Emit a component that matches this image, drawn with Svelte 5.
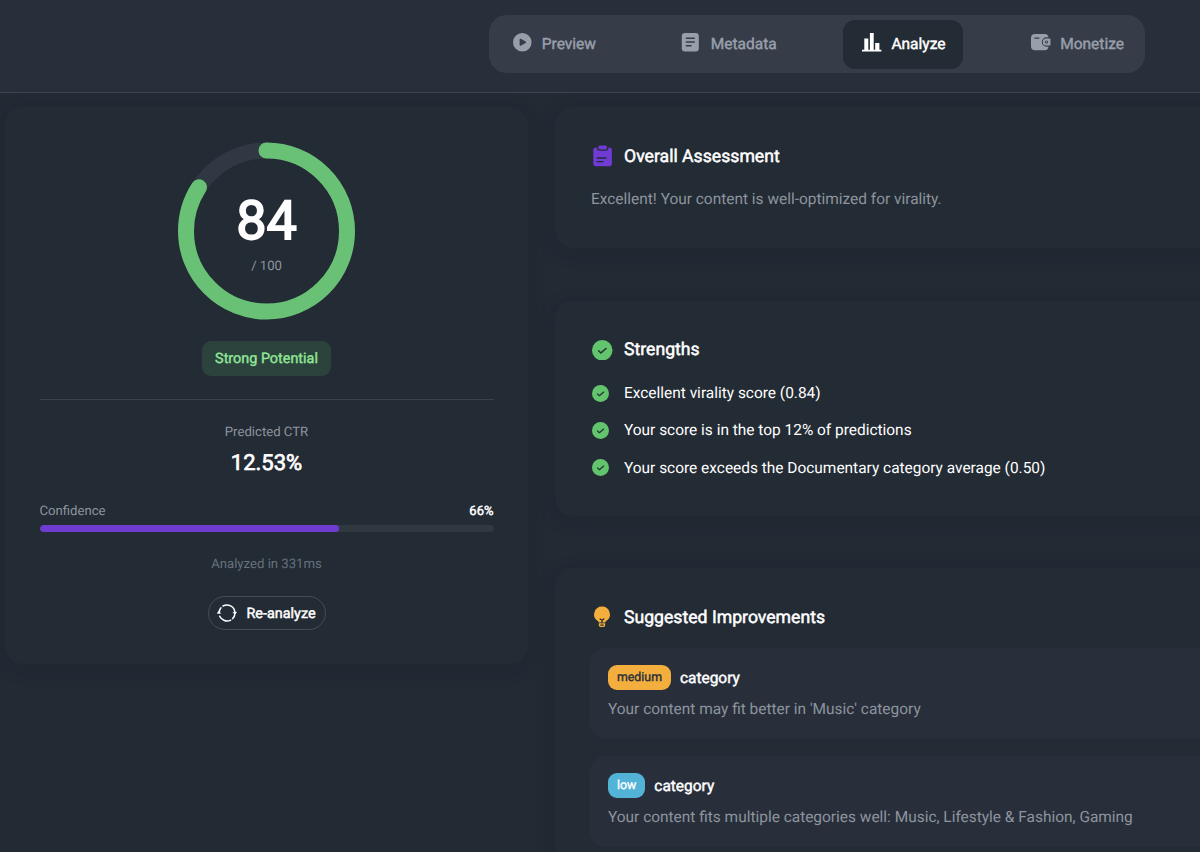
<script>
  const tabs = [
    { id: 'preview', label: 'Preview' },
    { id: 'metadata', label: 'Metadata' },
    { id: 'analyze', label: 'Analyze' },
    { id: 'monetize', label: 'Monetize' }
  ];
  const active = 'analyze';
  const score = 84;
  const confidence = 66;
  const radius = 80.5;
  const around = 2 * Math.PI * radius;
  const strengths = [
    'Excellent virality score (0.84)',
    'Your score is in the top 12% of predictions',
    'Your score exceeds the Documentary category average (0.50)'
  ];
  const improvements = [
    { level: 'medium', field: 'category', text: "Your content may fit better in 'Music' category" },
    { level: 'low', field: 'category', text: 'Your content fits multiple categories well: Music, Lifestyle & Fashion, Gaming' }
  ];
</script>

{#snippet check(size)}
  <svg width={size} height={size} viewBox="0 0 20 20">
    <circle cx="10" cy="10" r="10" fill="#63c46e" />
    <path d="M6.4 10.5l2.3 2.1 5-4.3" fill="none" stroke="#24302f" stroke-width="1.4" stroke-linecap="round" stroke-linejoin="round" />
  </svg>
{/snippet}

<div class="page">
  <header>
    <nav>
      {#each tabs as tab}
        <button class="tab" class:active={tab.id === active}>
          <svg width="20" height="20" viewBox="0 0 20 20" fill="currentColor">
            {#if tab.id === 'preview'}
              <path fill-rule="evenodd" d="M9.3 0a9.3 9.3 0 1 1 0 18.6A9.3 9.3 0 0 1 9.3 0zM6.6 6.5v5.6c0 .7.7 1 1.2.7l4.8-2.8c.6-.4.6-1 0-1.4L7.8 5.8c-.5-.3-1.2 0-1.2.7z" />
            {:else if tab.id === 'metadata'}
              <rect x="0.800" y="0" width="17" height="18.500" rx="3.200" />
              <path d="M5.300 5.200h8M5.300 9h8M5.300 12.800h4.800" stroke="#363d49" stroke-width="1.400" stroke-linecap="round" />
            {:else if tab.id === 'analyze'}
              <path d="M2.300 5.500h4v11.300h1.600V0h3.800v16.800h1.500V10h4.200v6.800h2v1.600H0v-1.600h2.300z" />
            {:else}
              <path d="M4 1h9.500a4 4 0 0 1 4 3.300h-2a4.700 4.700 0 0 0 0 9.400h2a4 4 0 0 1-4 3.500H4a4 4 0 0 1-4-4V5a4 4 0 0 1 4-4z" />
              <path d="M3.800 5.200h4" stroke="#363d49" stroke-width="1.300" stroke-linecap="round" />
              <path fill-rule="evenodd" d="M15.300 5.500h3.100c.7 0 1.100.4 1.100 1v5c0 .6-.4 1-1.100 1h-3.100a3.500 3.500 0 0 1 0-7zm.2 1.900a1.600 1.600 0 1 0 0 3.200 1.600 1.600 0 0 0 0-3.200z" />
              <circle cx="15.500" cy="9" r=".7" />
            {/if}
          </svg>
          <span>{tab.label}</span>
        </button>
      {/each}
    </nav>
  </header>

  <main>
    <section class="card summary">
      <div class="gauge">
        <svg width="178" height="178" viewBox="0 0 178 178" fill="none" stroke-width="16">
          <circle cx="88.500" cy="89" r={radius} stroke="#303843" />
          <circle cx="88.500" cy="89" r={radius} stroke="#68c174" stroke-linecap="round"
            stroke-dasharray="{around * score / 100} {around}" transform="rotate(-90 88.500 89)" />
        </svg>
        <div class="reading">
          <strong>{score}</strong>
          <span>/ 100</span>
        </div>
      </div>
      <div class="verdict">Strong Potential</div>
      <hr />
      <div class="label">Predicted CTR</div>
      <div class="ctr">12.53%</div>
      <div class="confidence">
        <span class="label">Confidence</span>
        <b>{confidence}%</b>
      </div>
      <div class="bar"><div style="width: {confidence}%"></div></div>
      <div class="timing">Analyzed in 331ms</div>
      <button class="again">
        <svg width="20" height="20" viewBox="0 0 20 20" fill="none" stroke="currentColor" stroke-width="1.500" stroke-linecap="round">
          <path d="M2.100 9.600A8 8 0 0 1 4 4.800M6 3A8 8 0 0 1 17.900 9.200M17.900 10.600A8 8 0 0 1 15.700 15.600M13.700 17.100A8 8 0 0 1 2.700 13.300" />
          <path d="M16.400 9.300h3.200L18 11zM.4 10.300h3.200L2 8.700z" fill="currentColor" stroke-width=".7" stroke-linejoin="round" />
        </svg>
        <span>Re-analyze</span>
      </button>
    </section>

    <div class="details">
      <section class="card overall">
        <h2>
          <svg width="24" height="24" viewBox="0 0 24 24">
            <path fill="#6f3bd3" d="M5 3.400h.8A3.200 3.200 0 0 0 9 6.700h5.200a3.200 3.200 0 0 0 3.200-3.300h.8a2.700 2.700 0 0 1 2.700 2.700v13.400a2.700 2.700 0 0 1-2.700 2.700H5a2.700 2.700 0 0 1-2.700-2.700V6.100A2.700 2.700 0 0 1 5 3.400z" />
            <rect x="7.200" y="1.500" width="8.800" height="4" rx="1.700" fill="#6f3bd3" />
            <path d="M6.200 14h8.800M6.200 17.600h5.800" stroke="#232b34" stroke-width="1.400" stroke-linecap="round" />
          </svg>
          <span>Overall Assessment</span>
        </h2>
        <p>Excellent! Your content is well-optimized for virality.</p>
      </section>

      <section class="card strong">
        <h2><i>{@render check(20.5)}</i><span>Strengths</span></h2>
        <ul>
          {#each strengths as item}
            <li>{@render check(17)}<span>{item}</span></li>
          {/each}
        </ul>
      </section>

      <section class="card suggested">
        <h2>
          <svg width="24" height="24" viewBox="0 0 24 24">
            <path fill="#f4ae3d" d="M11 1.500a7.900 7.900 0 0 1 4.600 14.300c-.8.600-1.200 1-1.400 1.600H7.800c-.2-.6-.6-1-1.400-1.600A7.900 7.900 0 0 1 11 1.500zM7.800 18.300h6.400v1.500c0 1.600-.8 2.300-2.100 2.300H9.900c-1.300 0-2.100-.7-2.100-2.300z" />
            <path d="M9.100 14l1.900 1.300 1.900-1.300M11 15.300v2.400M9.800 20.100h2.400" fill="none" stroke="#232b34" stroke-width="1.300" stroke-linecap="round" />
          </svg>
          <span>Suggested Improvements</span>
        </h2>
        <div class="list">
          {#each improvements as item}
            <article>
              <div class="head"><span class="badge {item.level}">{item.level}</span><b>{item.field}</b></div>
              <p>{item.text}</p>
            </article>
          {/each}
        </div>
      </section>
    </div>
  </main>
</div>

<style>
  :global(body) { margin: 0; background: #222a34; overflow: hidden; }
  * { box-sizing: border-box; }
  .page { width: 1200px; height: 852px; overflow: hidden; font-family: Roboto, sans-serif; color: #fff; background: #222a34; text-rendering: geometricPrecision; }
  svg { display: block; flex: none; }
  button { font: inherit; color: inherit; background: none; border: 0; margin: 0; padding: 0; text-rendering: inherit; }
  header { height: 93px; background: #282f3b; border-bottom: 1px solid #3d444e; padding: 15px 55px 0 0; display: flex; justify-content: flex-end; align-items: flex-start; }
  nav { width: 656px; height: 58px; border-radius: 18px; background: #363d49; padding: 5px 3px 5px 4.500px; display: flex; justify-content: space-between; }
  .tab { height: 49px; padding: 0 18px 2px 19px; border-radius: 12px; display: flex; align-items: center; gap: 9.300px; color: #989faa; font-size: 15.500px; -webkit-text-stroke: 0.45px currentColor; }
  .tab svg { margin-bottom: 1px; }
  .tab.active { background: #232b34; color: #fff; }
  main { display: flex; gap: 27px; padding: 14px 0 0 5px; align-items: flex-start; }
  .card { background: #232b34; border-radius: 18px; box-shadow: 0 4px 18px rgba(20, 26, 35, 0.22); }
  .summary { width: 523px; height: 557px; padding: 35px 34.500px 0; display: flex; flex-direction: column; align-items: center; flex: none; }
  .gauge { display: grid; width: 178px; height: 178px; }
  .gauge > * { grid-area: 1 / 1; }
  .reading { display: flex; flex-direction: column; align-items: center; padding-top: 45px; }
  .reading strong { font-size: 54px; line-height: 70px; font-weight: 400; -webkit-text-stroke: 1.8px currentColor; }
  .reading span { font-size: 13.100px; line-height: 18px; margin-top: 1px; color: #8d949e; }
  .verdict { margin-top: 21px; height: 35px; padding: 0 13px; border-radius: 9px; background: #2c423d; color: #90e797; font-size: 14.400px; -webkit-text-stroke: 0.4px currentColor; line-height: 35px; }
  hr { width: 100%; height: 1px; border: 0; margin: 23px 0 0; background: #3a424c; }
  .label { font-size: 13.150px; line-height: 18px; color: #8d949e; }
  hr + .label { margin-top: 24px; }
  .ctr { font-size: 22px; line-height: 30px; -webkit-text-stroke: 0.7px currentColor; margin-top: 7px; }
  .confidence { width: 100%; display: flex; justify-content: space-between; margin-top: 24px; font-size: 13px; line-height: 18px; }
  b { font-weight: 400; -webkit-text-stroke: 0.45px currentColor; }
  .bar { width: 100%; height: 7px; border-radius: 4px; background: #303841; margin-top: 4px; overflow: hidden; }
  .bar div { height: 100%; border-radius: 4px; background: #6f3cd2; }
  .timing { margin-top: 24px; font-size: 13.150px; line-height: 18px; color: #66717e; }
  .again { margin-top: 22px; width: 118px; height: 34px; border: 1px solid #444c56; border-radius: 17px; display: flex; align-items: center; gap: 10px; padding: 0 0 0 8px; font-size: 14.400px; -webkit-text-stroke: 0.45px currentColor; }
  .details { display: flex; flex-direction: column; width: 700px; flex: none; }
  .card.overall, .card.strong, .card.suggested { padding: 36px 35px 0 36px; }
  .overall { height: 141px; }
  .strong { height: 215px; margin-top: 53px; }
  .suggested { height: 330px; margin-top: 52px; }
  h2 { margin: 0; height: 26px; display: flex; align-items: center; gap: 9px; font-size: 17.650px; line-height: 26px; font-weight: 400; -webkit-text-stroke: 0.5px currentColor; }
  .overall h2 span, .suggested h2 span { padding-top: 1px; }
  h2 i { width: 24px; padding-left: 1px; }
  p { margin: 0; font-size: 15.450px; line-height: 22px; color: #8d949e; }
  .overall p { margin-top: 19px; }
  ul { list-style: none; margin: 19px 0 0; padding: 0; }
  li { display: flex; align-items: center; gap: 15px; padding-left: 1px; height: 22px; margin-bottom: 15.450px; font-size: 15.450px; }
  .list { display: flex; flex-direction: column; gap: 17px; margin: 18px 0 0 -1px; }
  article { height: 91px; border-radius: 15px; background: #282f3b; padding: 17px 18px; }
  .head { display: flex; align-items: center; gap: 9px; height: 25px; font-size: 15.450px; }
  .badge { height: 25px; padding: 1px 9px 0; border-radius: 9px; font-size: 12.350px; line-height: 25px; -webkit-text-stroke: 0.35px currentColor; }
  .medium { background: #f4ae3d; color: #282f3b; }
  .low { background: #52b3d7; }
  article p { margin-top: 7.500px; }
</style>
